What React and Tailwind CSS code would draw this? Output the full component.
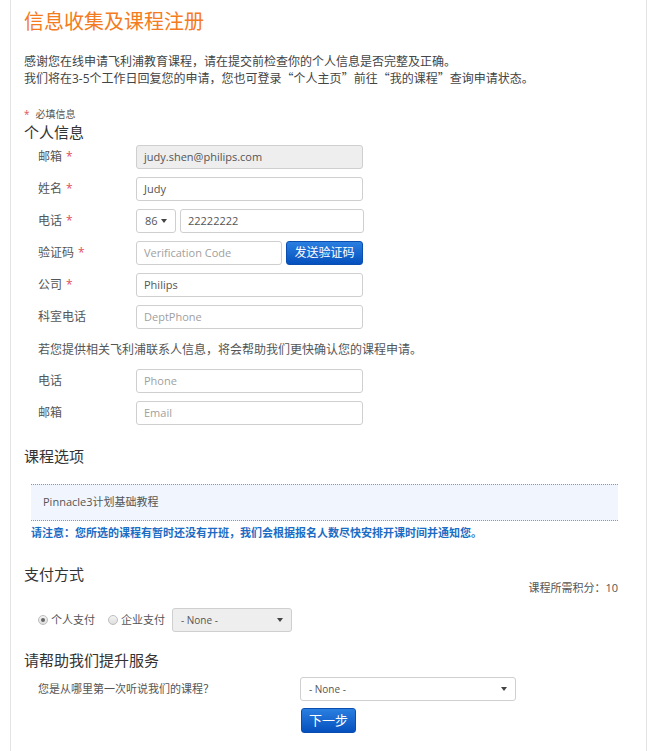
import React from "react";

const font = { fontFamily: '"Open Sans", "Noto Sans CJK SC", sans-serif' };

function Star() {
    return <span className="text-[#e0505a] ml-[4px]">*</span>;
}

// fullwidth quotes so they take CJK spacing like the reference
function Q({ children }) {
    return <span className="font-['Noto_Sans_CJK_SC']">“{children}”</span>;
}

function Field({ label, required, children }) {
    return (
        <div className="flex items-center h-[24px]">
            <div className="w-[112px] pl-[14px] text-[12px] text-[#555]">
                {label}
                {required && <Star />}
            </div>
            {children}
        </div>
    );
}

function Input({ value, placeholder, disabled, className = "w-[227px]" }) {
    return (
        <div
            className={`${className} h-[24px] flex items-center px-[7px] rounded-[3px] border border-[#cfcfcf] text-[11px] ${
                disabled ? "bg-[#eeeeee]" : "bg-white"
            } ${value ? "text-[#555]" : "text-[#a0a0a0]"}`}
        >
            {value || placeholder}
        </div>
    );
}

function Caret() {
    return <span className="w-0 h-0 border-l-[3px] border-r-[3px] border-t-[4px] border-l-transparent border-r-transparent border-t-[#444]" />;
}

function Select({ value, className, gray }) {
    return (
        <div
            className={`${className} flex items-center justify-between pl-[8px] pr-[8px] rounded-[3px] border border-[#cfcfcf] text-[10px] text-[#555] ${
                gray ? "bg-[#eeeeee]" : "bg-white"
            }`}
        >
            <span>{value}</span>
            <Caret />
        </div>
    );
}

function BlueButton({ children, className }) {
    return (
        <button
            className={`${className} rounded-[3px] border border-[#0a4eb0] bg-gradient-to-b from-[#2a7fe0] to-[#0550be] text-white text-[12px] flex items-center justify-center`}
        >
            {children}
        </button>
    );
}

function Radio({ checked }) {
    return (
        <span className="w-[10px] h-[10px] rounded-full border border-[#bdbdbd] bg-gradient-to-b from-[#f4f4f4] to-[#dedede] flex items-center justify-center">
            {checked && <span className="w-[4px] h-[4px] rounded-full bg-[#666]" />}
        </span>
    );
}

export default function App() {
    return (
        <div className="w-full min-h-[751px] bg-white" style={font}>
            <div className="ml-[10px] w-[637px] min-h-[751px] border-x border-[#e3e3e3] pl-[13px] pr-[28px] pb-[20px]">
                <h1 className="text-[20px] leading-[24px] pt-[10px] text-[#f47b20]">信息收集及课程注册</h1>

                <p className="mt-[20px] text-[12px] leading-[16px] text-[#444]">
                    感谢您在线申请飞利浦教育课程，请在提交前检查你的个人信息是否完整及正确。
                    <br />
                    我们将在3-5个工作日回复您的申请，您也可登录<Q>个人主页</Q>前往<Q>我的课程</Q>查询申请状态。
                </p>

                <div className="mt-[20px] text-[10px] leading-[14px] text-[#555]">
                    <span className="text-[#e0505a] mr-[6px]">*</span>必填信息
                </div>
                <h3 className="mt-[1px] text-[15px] leading-[20px] text-[#333]">个人信息</h3>

                <div className="mt-[3px] flex flex-col gap-[8px]">
                    <Field label="邮箱" required>
                        <Input value="judy.shen@philips.com" disabled />
                    </Field>
                    <Field label="姓名" required>
                        <Input value="Judy" />
                    </Field>
                    <Field label="电话" required>
                        <div className="flex gap-[4px]">
                            <Select value="86" className="w-[40px] h-[24px] text-[11px]" />
                            <Input value="22222222" className="w-[184px]" />
                        </div>
                    </Field>
                    <Field label="验证码" required>
                        <div className="flex gap-[4px]">
                            <Input placeholder="Verification Code" className="w-[146px]" />
                            <BlueButton className="w-[77px] h-[24px]">发送验证码</BlueButton>
                        </div>
                    </Field>
                    <Field label="公司" required>
                        <Input value="Philips" />
                    </Field>
                    <Field label="科室电话">
                        <Input placeholder="DeptPhone" />
                    </Field>
                </div>

                <p className="mt-[13px] pl-[14px] text-[12px] leading-[16px] text-[#555]">
                    若您提供相关飞利浦联系人信息，将会帮助我们更快确认您的课程申请。
                </p>

                <div className="mt-[11px] flex flex-col gap-[8px]">
                    <Field label="电话">
                        <Input placeholder="Phone" />
                    </Field>
                    <Field label="邮箱">
                        <Input placeholder="Email" />
                    </Field>
                </div>

                <h3 className="mt-[21px] text-[15px] leading-[20px] text-[#333]">课程选项</h3>

                <div className="mt-[18px] ml-[7px] h-[37px] flex items-center px-[12px] bg-[#f1f5fd] border-y border-dotted border-[#6d9be0] text-[11px] text-[#555]">
                    Pinnacle3计划基础教程
                </div>
                <p className="mt-[4px] ml-[7px] text-[11px] leading-[16px] font-bold text-[#1b6cc4]">
                    请注意：您所选的课程有暂时还没有开班，我们会根据报名人数尽快安排开课时间并通知您。
                </p>

                <h3 className="mt-[23px] text-[15px] leading-[20px] text-[#333]">支付方式</h3>
                <div className="-mt-[4px] text-right text-[11px] leading-[16px] text-[#555]">课程所需积分：10</div>

                <div className="mt-[12px] pl-[14px] flex items-center h-[24px] text-[11px] text-[#555]">
                    <Radio checked />
                    <span className="ml-[3px]">个人支付</span>
                    <span className="ml-[13px]"><Radio /></span>
                    <span className="ml-[3px]">企业支付</span>
                    <Select value="- None -" className="ml-[7px] w-[120px] h-[24px]" gray />
                </div>

                <h3 className="mt-[18px] text-[15px] leading-[20px] text-[#333]">请帮助我们提升服务</h3>

                <div className="mt-[7px] flex items-center h-[24px]">
                    <div className="w-[276px] pl-[14px] text-[11px] text-[#555]">您是从哪里第一次听说我们的课程？</div>
                    <Select value="- None -" className="w-[216px] h-[24px]" />
                </div>

                <div className="mt-[7px] pl-[277px]">
                    <BlueButton className="w-[55px] h-[25px] text-[13px]">下一步</BlueButton>
                </div>
            </div>
        </div>
    );
}
